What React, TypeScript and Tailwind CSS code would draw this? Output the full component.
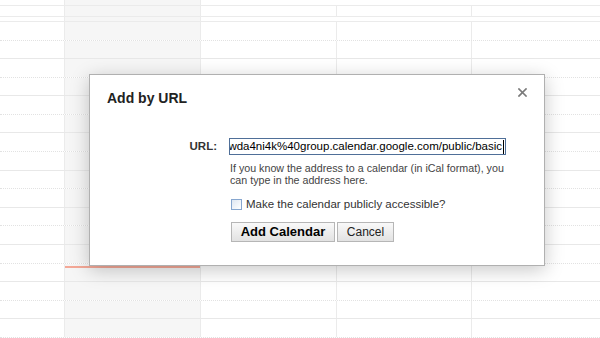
import React from "react";

const HALF_ROWS = Array.from({ length: 18 }, (_, i) => i);

function Cells({ lines }: { lines: "all" | "grey" }) {
  return (
    <>
      <div className="h-full w-[65px] shrink-0 border-r border-[#ebebeb]" />
      <div className="h-full w-[136px] shrink-0 border-r border-[#ebebeb] bg-[#f6f6f6]" />
      <div className={`h-full w-[136px] shrink-0 border-r ${lines === "all" ? "border-[#ebebeb]" : "border-transparent"}`} />
      <div className={`h-full w-[135px] shrink-0 border-r ${lines === "all" ? "border-[#ebebeb]" : "border-transparent"}`} />
      <div className="h-full flex-1" />
    </>
  );
}

export default function App() {
  return (
    <div className="relative w-[600px] h-[338px] overflow-hidden bg-white font-['Liberation_Sans',Arial,sans-serif]">
      {/* calendar grid */}
      <div className="flex flex-col">
        <div className="flex h-[6px] border-b border-[#ebebeb]">
          <Cells lines="grey" />
        </div>
        <div className="flex h-[11px] border-b border-[#ebebeb]">
          <Cells lines="all" />
        </div>
        <div className="flex h-[5px] border-b border-[#ebebeb]">
          <Cells lines="grey" />
        </div>
        {HALF_ROWS.map((i) => (
          <div
            key={i}
            className={
              i % 2 === 0
                ? "flex h-[18.585px] shrink-0 border-b border-dotted border-[#e2e2e2]"
                : "flex h-[18.585px] shrink-0 border-b border-[#e8e8e8]"
            }
          >
            <Cells lines="all" />
          </div>
        ))}
      </div>

      {/* current time marker */}
      <div className="absolute left-[65px] top-[266px] w-[135px] h-[2px] bg-[#f4a897]" />

      {/* dialog */}
      <div className="absolute left-[89px] top-[74px] w-[456px] h-[192px] bg-white border border-[#b0b0b0] shadow-[0_4px_18px_rgba(0,0,0,0.22)]">
        <div className="flex justify-between items-start pt-[15px] pl-[17px] pr-[17px]">
          <div className="text-[14px] leading-[17px] font-bold text-[#222]">Add by URL</div>
          <svg width="9" height="9" viewBox="0 0 9 9" className="mt-[-2px]">
            <path d="M1 1 L8 8 M8 1 L1 8" stroke="#7a7a7a" strokeWidth="1.7" strokeLinecap="square" />
          </svg>
        </div>

        <div className="flex mt-[31px]">
          <div className="w-[127px] text-right text-[11.5px] leading-[17px] font-bold text-[#333]">URL:</div>
          <div className="ml-[12px] flex flex-col">
            <div className="w-[277px] h-[17px] border border-[#4f6f98] flex justify-end items-center overflow-hidden pr-[1px]">
              <span className="whitespace-nowrap text-[11.5px] leading-[15px] text-black">
                wda4ni4k%40group.calendar.google.com/public/basic
              </span>
              <span className="ml-[1px] w-[1px] h-[14px] bg-black shrink-0" />
            </div>
            <div className="mt-[6.7px] ml-[1px] text-[10.7px] leading-[12.6px] text-[#444] whitespace-nowrap">
              If you know the address to a calendar (in iCal format), you
              <br />
              can type in the address here.
            </div>
            <div className="mt-[10.4px] flex items-center h-[14px]">
              <div className="ml-[2px] w-[11px] h-[11px] border border-[#86a6cf] bg-gradient-to-br from-[#dde6f1] to-white" />
              <div className="ml-[4px] text-[11.5px] leading-[14px] text-[#333]">
                Make the calendar publicly accessible?
              </div>
            </div>
            <div className="mt-[10.7px] ml-[2px] flex gap-[2px]">
              <button className="w-[104px] h-[20px] border border-[#b6b6b6] bg-gradient-to-b from-[#f9f9f9] to-[#e2e2e2] text-[13px] font-bold text-black leading-[18px] p-0">
                Add Calendar
              </button>
              <button className="w-[57px] h-[20px] border border-[#b6b6b6] bg-gradient-to-b from-[#f9f9f9] to-[#e2e2e2] text-[12px] text-[#222] leading-[18px] p-0">
                Cancel
              </button>
            </div>
          </div>
        </div>
      </div>
    </div>
  );
}
